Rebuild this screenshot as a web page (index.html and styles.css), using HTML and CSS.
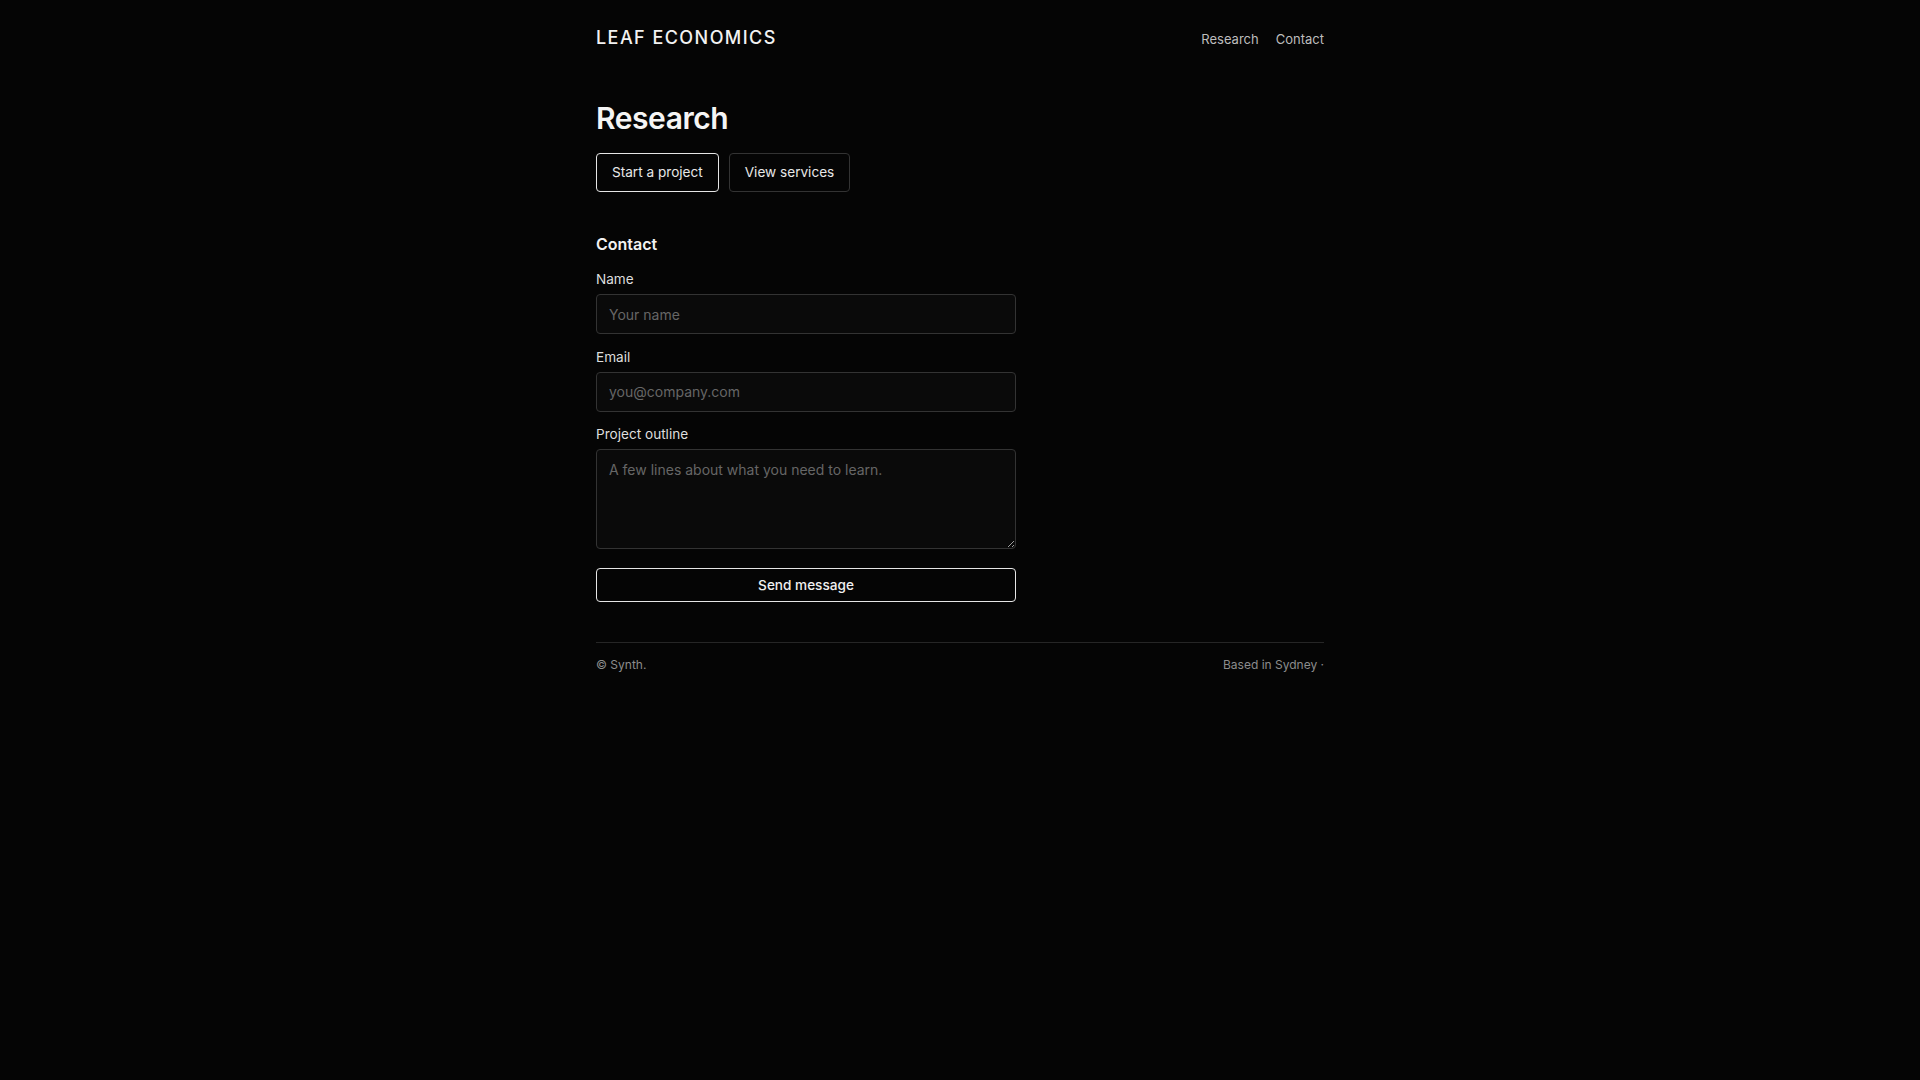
FILE: index.html
```html
<!DOCTYPE html>
<html lang="en">
<head>
<meta charset="utf-8">
<title>Leaf Economics — Research</title>
<link rel="stylesheet" href="styles.css">
</head>
<body>
<div class="page">
  <header class="site-header">
    <div class="brand">LEAF ECONOMICS</div>
    <nav class="nav">
      <a href="#" class="nav-link">Research</a>
      <a href="#" class="nav-link">Contact</a>
    </nav>
  </header>
  <main>
    <h1 class="title">Research</h1>
    <div class="actions">
      <a href="#" class="btn btn-primary">Start a project</a>
      <a href="#" class="btn btn-secondary">View services</a>
    </div>
    <section class="contact">
      <h2 class="contact-title">Contact</h2>
      <form class="form">
        <div class="field">
          <label class="label" for="name">Name</label>
          <input class="input" id="name" type="text" placeholder="Your name">
        </div>
        <div class="field">
          <label class="label" for="email">Email</label>
          <input class="input" id="email" type="email" placeholder="you@company.com">
        </div>
        <div class="field">
          <label class="label" for="outline">Project outline</label>
          <textarea class="input textarea" id="outline" placeholder="A few lines about what you need to learn."></textarea>
        </div>
        <button type="button" class="submit">Send message</button>
      </form>
    </section>
  </main>
  <footer class="site-footer">
    <span>© Synth.</span>
    <span>Based in Sydney ·</span>
  </footer>
</div>
</body>
</html>
```

FILE: styles.css
```css
* { box-sizing: border-box; }
html, body { margin: 0; padding: 0; }
body {
  background: #050505;
  color: #eeeeee;
  font-family: Inter, "Noto Sans", "Liberation Sans", sans-serif;
}
a { color: inherit; text-decoration: none; }

.page {
  width: 728px;
  margin: 0 auto;
}

.site-header {
  display: flex;
  justify-content: space-between;
  align-items: baseline;
  padding: 26px 0 24px;
}
.brand {
  font-size: 18px;
  line-height: 24px;
  font-weight: 500;
  letter-spacing: 0.08em;
  color: #f2f2f2;
}
.nav {
  display: flex;
  gap: 17px;
}
.nav-link {
  font-size: 13px;
  line-height: 20px;
  color: #bdbdbd;
}

.title {
  margin: 26px 0 0;
  font-size: 30px;
  line-height: 36px;
  font-weight: 600;
  letter-spacing: -0.015em;
  color: #f5f5f5;
}

.actions {
  display: flex;
  gap: 10px;
  margin-top: 17px;
}
.btn {
  display: inline-block;
  font-size: 13.6px;
  line-height: 19px;
  padding: 9px 15px;
  border-radius: 4px;
  color: #e8e8e8;
}
.btn-primary { border: 1px solid #e6e6e6; }
.btn-secondary { border: 1px solid #333333; }

.contact { margin-top: 40px; }
.contact-title {
  margin: 0 0 13px;
  font-size: 16px;
  line-height: 24px;
  font-weight: 600;
  color: #f2f2f2;
}

.form {
  width: 420px;
  display: flex;
  flex-direction: column;
  gap: 12.5px;
}
.field {
  display: flex;
  flex-direction: column;
  gap: 5px;
}
.label {
  font-size: 13.6px;
  line-height: 20px;
  color: #dedede;
}
.input {
  width: 100%;
  height: 40px;
  padding: 0 12px;
  background: #0a0a0a;
  border: 1px solid #333333;
  border-radius: 4px;
  color: #eeeeee;
  font-family: inherit;
  font-size: 14px;
  outline: none;
}
.input::placeholder { color: #666666; }
.textarea {
  height: 100px;
  padding: 10px 12px;
  line-height: 20px;
  resize: vertical;
  display: block;
}
.submit {
  margin-top: 6.5px;
  width: 100%;
  height: 34px;
  background: transparent;
  border: 1px solid #e6e6e6;
  border-radius: 4px;
  color: #f0f0f0;
  font-family: inherit;
  font-size: 13.6px;
  font-weight: 500;
  line-height: 20px;
}

.site-footer {
  margin-top: 40px;
  border-top: 1px solid #262626;
  padding-top: 13px;
  display: flex;
  justify-content: space-between;
  font-size: 12px;
  line-height: 18px;
  color: #8c8c8c;
}
```
